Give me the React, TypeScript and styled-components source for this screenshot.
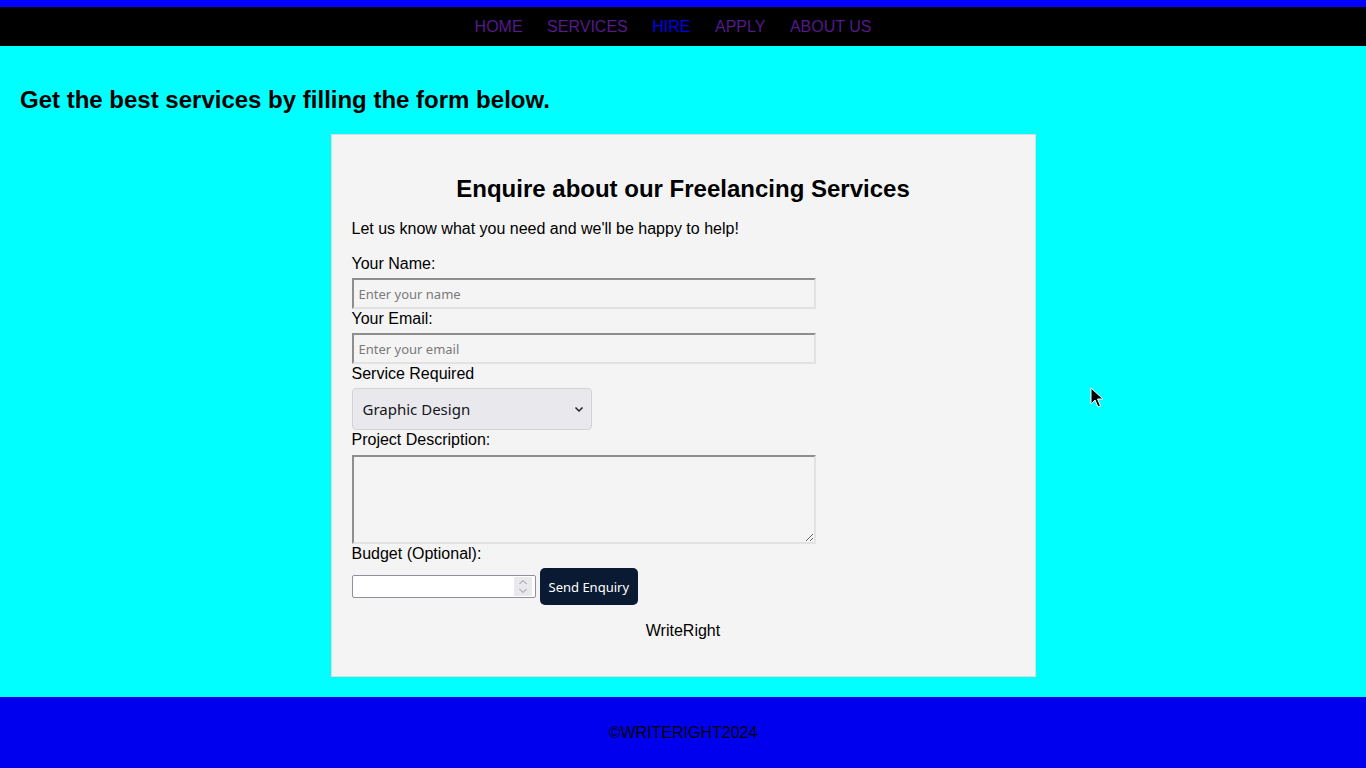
import React from "react";
import styled, { createGlobalStyle } from "styled-components";

const GlobalStyle = createGlobalStyle`
  html, body {
    margin: 0;
    padding: 0;
    background: #00ffff;
    font-family: "Liberation Sans", Arial, sans-serif;
    color: #000;
  }
  * { box-sizing: border-box; }
`;

const Page = styled.div`
  position: relative;
  min-height: 768px;
  display: flex;
  flex-direction: column;
  background: #00ffff;
`;

const TopBar = styled.div`
  height: 7px;
  background: #0000ff;
`;

const Nav = styled.nav`
  height: 39px;
  background: #000;
  display: flex;
  align-items: center;
  justify-content: center;
  gap: 24.5px;
  padding-right: 20px;
`;

const NavLink = styled.a<{ $active?: boolean }>`
  font-size: 16px;
  line-height: 18px;
  text-decoration: none;
  color: ${(p) => (p.$active ? "#0000ee" : "#551a8b")};
`;

const Main = styled.main`
  flex: 1;
  padding: 40px 20px 20px;
`;

const Lead = styled.h2`
  margin: 0 0 20px;
  font-size: 24px;
  line-height: 28px;
  font-weight: bold;
`;

const Card = styled.section`
  width: 705px;
  margin: 0 auto;
  background: #f4f4f4;
  border: 1px solid #dcdcdc;
  padding: 20px;
`;

const Title = styled.h2`
  margin: 19px 0 16px;
  padding-top: 1px;
  text-align: center;
  font-size: 24px;
  line-height: 28px;
  font-weight: bold;
`;

const Text = styled.p<{ $center?: boolean }>`
  margin: 0 0 16px;
  padding-top: 1px;
  font-size: 16px;
  line-height: 18px;
  text-align: ${(p) => (p.$center ? "center" : "left")};
`;

const Label = styled.label`
  display: block;
  padding-top: 1px;
  font-size: 16px;
  line-height: 18px;
  margin-bottom: 5px;
`;

const insetField = `
  display: block;
  width: 464px;
  background: #f4f4f4;
  border-style: solid;
  border-width: 2px;
  border-color: #8e8e8e #e2e2e2 #e2e2e2 #8e8e8e;
  font-family: "Noto Sans", sans-serif;
  font-size: 13px;
  color: #000;
  outline: none;
`;

const TextInput = styled.input`
  ${insetField}
  height: 31px;
  padding: 0 5px;
  &::placeholder { color: #7a7a7a; }
`;

const TextArea = styled.textarea`
  ${insetField}
  height: 89px;
  margin-top: 6px;
  padding: 4px 5px;
  resize: both;
`;

const SelectWrap = styled.div`
  position: relative;
  width: 240px;
`;

const Select = styled.select`
  appearance: none;
  display: block;
  width: 240px;
  height: 42px;
  padding: 0 10px;
  background: #e9e9ed;
  border: 1px solid #d2d2d8;
  border-radius: 4px;
  font-family: "Noto Sans", sans-serif;
  font-size: 15px;
  color: #15141a;
`;

const Chevron = styled.svg`
  position: absolute;
  right: 8px;
  top: 16px;
  pointer-events: none;
`;

const BudgetRow = styled.div`
  display: flex;
  align-items: center;
  gap: 4px;
  margin-bottom: 16px;
`;

const NumberWrap = styled.div`
  position: relative;
  width: 184px;
  height: 23px;
`;

const NumberInput = styled.input`
  width: 184px;
  height: 23px;
  background: #fff;
  border: 1px solid #8f8f9d;
  border-radius: 2px;
  padding: 0 24px 0 4px;
  font-family: "Noto Sans", sans-serif;
  font-size: 13px;
  -moz-appearance: textfield;
  &::-webkit-inner-spin-button,
  &::-webkit-outer-spin-button {
    -webkit-appearance: none;
    margin: 0;
  }
`;

const Spinner = styled.svg`
  position: absolute;
  right: 4px;
  top: 2px;
  pointer-events: none;
`;

const SendButton = styled.button`
  height: 37px;
  padding: 0 9px;
  background: #0b1a33;
  color: #fff;
  border: none;
  border-radius: 5px;
  font-family: "Noto Sans", sans-serif;
  font-size: 13px;
`;

const Footer = styled.footer`
  height: 71px;
  background: #0000ee;
  display: flex;
  align-items: center;
  justify-content: center;
  font-size: 16px;
  color: #000;
`;

const Cursor = styled.svg`
  position: absolute;
  left: 1090px;
  top: 387px;
`;

export default function App() {
  return (
    <Page>
      <GlobalStyle />
      <TopBar />
      <Nav>
        <NavLink href="#">HOME</NavLink>
        <NavLink href="#">SERVICES</NavLink>
        <NavLink href="#" $active>HIRE</NavLink>
        <NavLink href="#">APPLY</NavLink>
        <NavLink href="#">ABOUT US</NavLink>
      </Nav>
      <Main>
        <Lead>Get the best services by filling the form below.</Lead>
        <Card>
          <Title>Enquire about our Freelancing Services</Title>
          <Text>Let us know what you need and we'll be happy to help!</Text>
          <form onSubmit={(e) => e.preventDefault()}>
            <Label htmlFor="name">Your Name:</Label>
            <TextInput id="name" placeholder="Enter your name" />
            <Label htmlFor="email">Your Email:</Label>
            <TextInput id="email" placeholder="Enter your email" />
            <Label htmlFor="service">Service Required</Label>
            <SelectWrap>
              <Select id="service" defaultValue="graphic">
                <option value="graphic">Graphic Design</option>
                <option value="web">Web Development</option>
                <option value="writing">Content Writing</option>
              </Select>
              <Chevron width="10" height="10" viewBox="0 0 10 10">
                <path d="M1.5 3.5 L5 7 L8.5 3.5" fill="none" stroke="#222" strokeWidth="1.5" />
              </Chevron>
            </SelectWrap>
            <Label htmlFor="desc">Project Description:</Label>
            <TextArea id="desc" />
            <Label htmlFor="budget">Budget (Optional):</Label>
            <BudgetRow>
              <NumberWrap>
                <NumberInput id="budget" type="number" />
                <Spinner width="18" height="19" viewBox="0 0 18 19">
                  <rect width="18" height="19" fill="#e9e9ed" />
                  <path d="M5.5 7 L9 3.5 L12.5 7" fill="none" stroke="#8f8f9d" strokeWidth="1" />
                  <path d="M5.5 12 L9 15.5 L12.5 12" fill="none" stroke="#8f8f9d" strokeWidth="1" />
                </Spinner>
              </NumberWrap>
              <SendButton type="submit">Send Enquiry</SendButton>
            </BudgetRow>
          </form>
          <Text $center>WriteRight</Text>
        </Card>
      </Main>
      <Footer>©WRITERIGHT2024</Footer>
      <Cursor width="14" height="22" viewBox="0 0 14 22">
        <path d="M1 1 L1 17 L5 13 L8 20 L10.5 19 L7.5 12 L13 12 Z" fill="#000" stroke="#fff" strokeWidth="1" />
      </Cursor>
    </Page>
  );
}
